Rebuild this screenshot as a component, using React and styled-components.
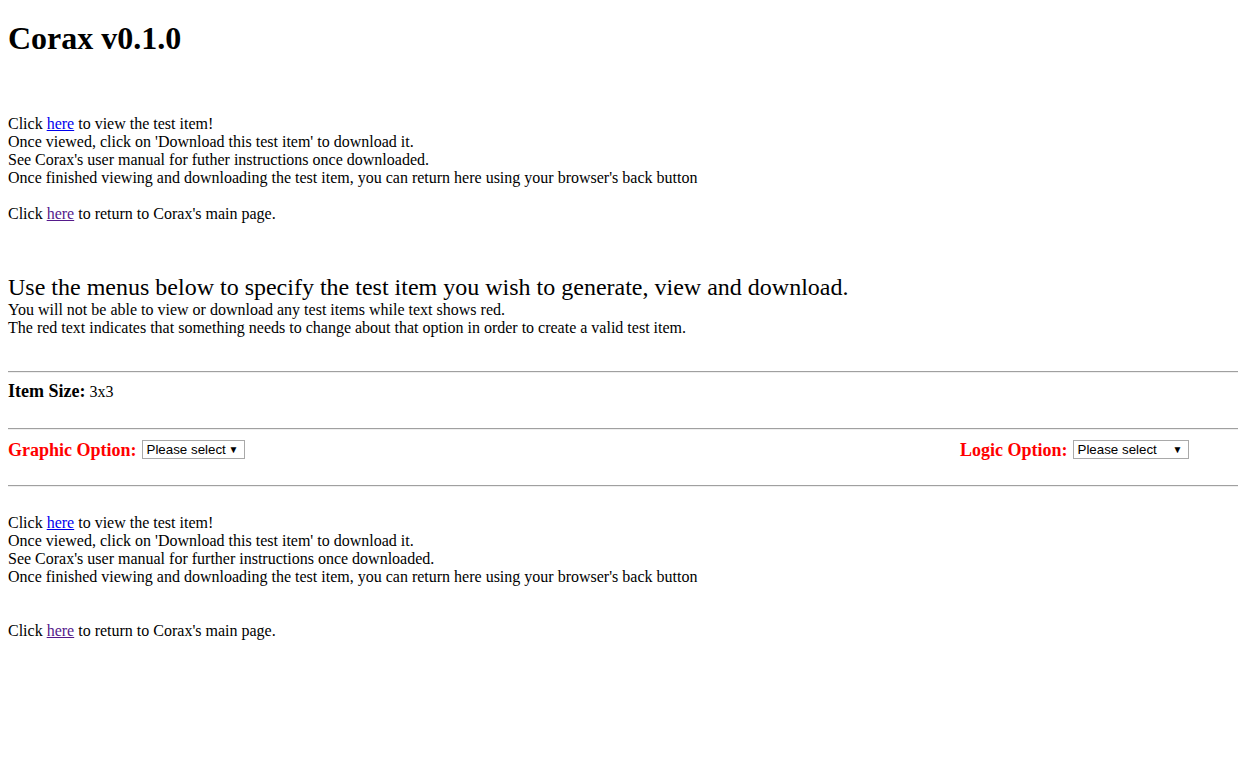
import React from 'react';
import styled, { createGlobalStyle } from 'styled-components';

const GlobalStyle = createGlobalStyle`
  html, body {
    margin: 0;
    padding: 0;
    background: #ffffff;
  }
  body {
    font-family: 'Liberation Serif', 'Times New Roman', serif;
    font-size: 16px;
    line-height: 18px;
    color: #000000;
  }
`;

const instructions = [
  "Once viewed, click on 'Download this test item' to download it.",
  null,
  "Once finished viewing and downloading the test item, you can return here using your browser's back button",
];

const App = () => {
  return (
    <>
      <GlobalStyle />
      <Page>
        <Title>Corax v0.1.0</Title>

        <TextBlock $top={58}>
          <HelpLines manual="See Corax's user manual for futher instructions once downloaded." />
          <Spacer $lines={1} />
          <Line>
            Click <Link href="#">here</Link> to return to Corax's main page.
          </Line>
        </TextBlock>

        <IntroHeading>Use the menus below to specify the test item you wish to generate, view and download.</IntroHeading>
        <Line>You will not be able to view or download any test items while text shows red.</Line>
        <Line>The red text indicates that something needs to change about that option in order to create a valid test item.</Line>

        <Divider $top={34} />
        <FieldRow>
          <Label>Item Size:</Label>
          <span>3x3</span>
        </FieldRow>

        <Divider />
        <OptionRow>
          <OptionCell>
            <Label $invalid>Graphic Option:</Label>
            <FakeSelect $width={103}>
              <span>Please select</span>
              <Arrow>▼</Arrow>
            </FakeSelect>
          </OptionCell>
          <OptionCell>
            <Label $invalid>Logic Option:</Label>
            <FakeSelect $width={116}>
              <span>Please select</span>
              <Arrow>▼</Arrow>
            </FakeSelect>
          </OptionCell>
        </OptionRow>

        <Divider />
        <TextBlock $top={27}>
          <HelpLines manual="See Corax's user manual for further instructions once downloaded." />
          <Spacer $lines={2} />
          <Line>
            Click <Link href="#">here</Link> to return to Corax's main page.
          </Line>
        </TextBlock>
      </Page>
    </>
  );
};

const HelpLines = ({ manual }) => (
  <>
    <Line>
      Click <Link href="#" $fresh>here</Link> to view the test item!
    </Line>
    {instructions.map((text, i) => (
      <Line key={i}>{text === null ? manual : text}</Line>
    ))}
  </>
);

const Page = styled.div`
  padding: 0 0 40px 8px;
  width: 1230px;
`;

const Title = styled.h1`
  margin: 20px 0 0;
  font-size: 32px;
  line-height: 37px;
  font-weight: bold;
`;

const TextBlock = styled.div`
  margin-top: ${({ $top }) => $top || 0}px;
`;

const Line = styled.div`
  height: 18px;
  line-height: 18px;
  white-space: nowrap;
`;

const Spacer = styled.div`
  height: ${({ $lines }) => $lines * 18}px;
`;

const Link = styled.a`
  color: ${({ $fresh }) => ($fresh ? '#0000ee' : '#551a8b')};
  text-decoration: underline;
`;

const IntroHeading = styled.div`
  margin-top: 51px;
  font-size: 24px;
  line-height: 27px;
  white-space: nowrap;
`;

const Divider = styled.hr`
  margin: ${({ $top }) => $top || 0}px 0 0;
  width: 1230px;
  height: 0;
  border: none;
  border-top: 1px solid #a0a0a0;
  border-bottom: 1px solid #efefef;
`;

const FieldRow = styled.div`
  display: flex;
  align-items: baseline;
  gap: 4px;
  height: 19px;
  padding: 9px 0 27px;
`;

const Label = styled.b`
  font-size: 18px;
  font-weight: bold;
  color: ${({ $invalid }) => ($invalid ? '#ff0000' : '#000000')};
`;

const OptionRow = styled.div`
  display: grid;
  grid-template-columns: 952px auto;
  align-items: center;
  height: 19px;
  padding: 10px 0 26px;
`;

const OptionCell = styled.div`
  display: flex;
  align-items: center;
  gap: 5px;
`;

const FakeSelect = styled.div`
  box-sizing: border-box;
  display: flex;
  align-items: center;
  justify-content: space-between;
  width: ${({ $width }) => $width}px;
  height: 19px;
  padding: 0 5px 0 4px;
  border: 1px solid #a9a9a9;
  background: #ffffff;
  font-family: 'Liberation Sans', Arial, sans-serif;
  font-size: 13.33px;
  line-height: 17px;
  color: #000000;
`;

const Arrow = styled.span`
  font-size: 10px;
  line-height: 17px;
`;

export default App;
